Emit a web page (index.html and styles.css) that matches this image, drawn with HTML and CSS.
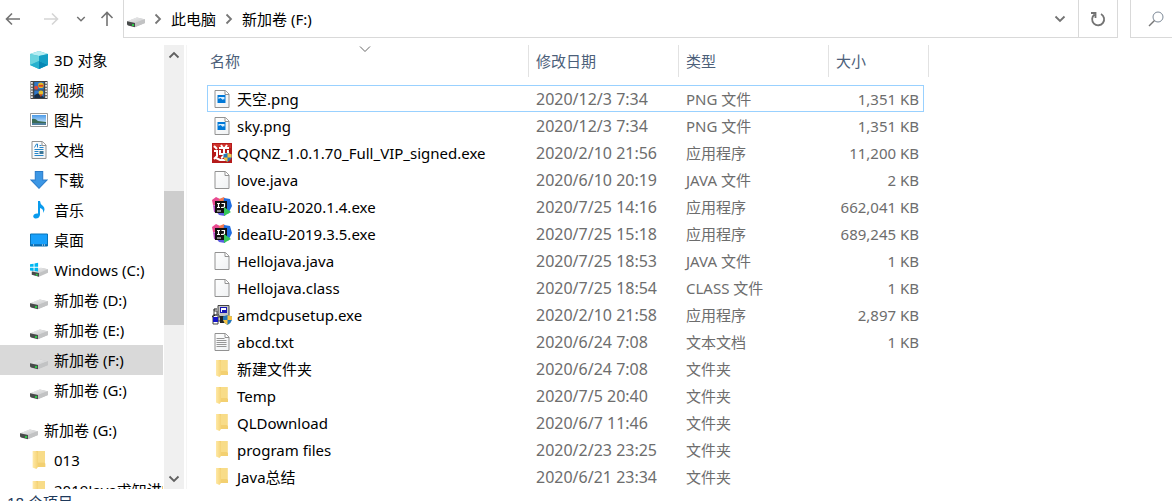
FILE: index.html
```
<!DOCTYPE html>
<html lang="zh-CN">
<head>
    <meta charset="UTF-8">
    <meta name="viewport" content="width=device-width, initial-scale=1.0">
    <title>新加卷 (F:)</title>
    <link rel="stylesheet" href="styles.css">
</head>
<body>
    <!-- shared icons -->
    <svg class="sprite" aria-hidden="true">
        <defs>
            <linearGradient id="paper" x2="1" y2="1"><stop offset="0" stop-color="#fff"/><stop offset="1" stop-color="#eff1f3"/></linearGradient>
            <linearGradient id="gold" x2="1"><stop offset="0" stop-color="#ffe9a6"/><stop offset="1" stop-color="#f5d376"/></linearGradient>
            <linearGradient id="sky" x2="0" y2="1"><stop offset="0" stop-color="#4c9be8"/><stop offset="1" stop-color="#e4f5ff"/></linearGradient>
            <linearGradient id="disk" x2="1" y2="1"><stop offset="0" stop-color="#eeeeef"/><stop offset="1" stop-color="#c8c9ca"/></linearGradient>
        </defs>
        <symbol id="drive" viewBox="0 0 18 18">
            <path d="M0 10.5 10 6.5 18 8.5 18 12 8 16 0 13z" fill="#bfc0c1"/>
            <path d="M0 10.2 9.5 6.5 18 8.2 8 12z" fill="url(#disk)"/>
            <path d="M0 10.2 8 12V16.2L1 14.4Q0 14 0 13z" fill="#484b4b"/>
            <path d="M8 12 18 8.2V12L8 16.2z" fill="#c2c3c4"/>
            <path d="M5 13h2v2H5z" fill="#28c943"/>
        </symbol>
        <symbol id="windrive" viewBox="0 0 20 18">
            <path d="M2 11 12 6.5 20 8.2V12L10 16.5 2 14z" fill="#c2c3c4"/>
            <path d="M2 10.7 12 6.5 20 8.2 10 12.2z" fill="url(#disk)"/>
            <path d="M2 10.7 10 12.2V16.5L2 14.3z" fill="#484b4b"/>
            <path d="M6.500 13.300h2v2h-2z" fill="#28c943"/>
            <path d="M0 2.500 4 2V5.500H0zM5 1.900 9 1V5.500H5zM0 6.500H4V10L0 9.500zM5 6.500H9V10.800L5 10.200z" fill="#00b7f1"/>
        </symbol>
        <symbol id="folder" viewBox="0 0 12 17">
            <path d="M3 0H11.500V11L12 12V15H3z" fill="#f3d071"/>
            <path d="M5 0H11.500V11H5z" fill="#f8dc88"/>
            <path d="M0 0H3L5 2V15L3.500 17 0 15.500z" fill="url(#gold)"/>
        </symbol>
        <symbol id="file" viewBox="0 0 15 18">
            <path d="M.5.5H11L14.500 4V17.500H.5z" fill="url(#paper)" stroke="#929292"/>
            <path d="M10.500.5V4.500H14.500" fill="#fff" stroke="#929292"/>
        </symbol>
        <symbol id="image" viewBox="0 0 15 18">
            <path d="M.5.5H11L14.500 4V17.500H.5z" fill="url(#paper)" stroke="#929292"/>
            <path d="M10.500.5V4.500H14.500" fill="#fff" stroke="#929292"/>
            <path d="M3 5H11V13H3z" fill="#0078d7"/>
            <path d="M4 7H10V9.500L9 9 8.500 10 6 8 4 9z" fill="#d9efff"/>
        </symbol>
        <symbol id="text" viewBox="0 0 15 18">
            <path d="M.5.5H11L14.500 4V17.500H.5z" fill="url(#paper)" stroke="#929292"/>
            <path d="M10.500.5V4.500H14.500" fill="#fff" stroke="#929292"/>
            <path d="M2 5.500H10M2 7.500H12M2 9.500H12M2 11.500H12M2 13.500H12" stroke="#969696"/>
        </symbol>
        <symbol id="shield" viewBox="0 0 9 10">
            <path d="M4.500 0 9 1.500V5Q8 8.500 4.500 10 1 8.500 0 5V1.500z" fill="#2677b8"/>
            <path d="M4.500 0 9 1.500V5H4.500zM0 5H4.500V10Q1 8.500 0 5z" fill="#f6c344"/>
        </symbol>
        <symbol id="qqnz" viewBox="0 0 20 20">
            <path d="M0 0H20V20H0z" fill="#b51b1b"/>
            <path d="M1 1H19V5H1z" fill="#cf332c"/>
            <path d="M2 3 5 6M2 8H5V13L2 16M4 15 8 17H14M7 5H17M9 2 11 5M15 2 13 5M8 7V11H16V7M12 5V11Q12 14 9 15" fill="none" stroke="#fff" stroke-width="2"/>
            <use href="#shield" x="11" y="10" width="9" height="9"/>
        </symbol>
        <symbol id="idea" viewBox="0 0 20 20">
            <path d="M0 3 4 0 10 3 8 9 1 8z" fill="#e84a91"/>
            <path d="M7 2 12 0 14 4 9 8z" fill="#f47950"/>
            <path d="M12 1 18 2 20 9 16 17 11 10z" fill="#1f6de0"/>
            <path d="M1 8 7 10 8 17 2 15z" fill="#b64ac5"/>
            <path d="M5 15 15 13 13 19 7 18z" fill="#5b5be0"/>
            <path d="M3 4H15V16H3z" fill="#111"/>
            <path d="M5 6.500H8M6.500 6V10.500M5 10.500H8M9.500 6.500H12.500V9.500Q12.500 10.500 9 10.500M5 14H9" fill="none" stroke="#fff" stroke-width="1.200"/>
            <path d="M12 10 19 15 12 19z" fill="#35c759"/>
        </symbol>
        <symbol id="setup" viewBox="0 0 20 20">
            <path d="M6 .5H17V10.500H15L18 13V16H5V12H8L6 9z" fill="#c5c5c5" stroke="#444"/>
            <path d="M8 2H15V8H8z" fill="#1717b5"/>
            <path d="M9 3H14V5H10V7H9z" fill="#fff"/>
            <path d="M2 6H5V10H2zM1 10H6V19H1z" fill="#fff" stroke="#444"/>
            <path d="M1 12H6V17H1z" fill="#1616c8"/>
            <path d="M0 12 3 10M2 6V4H5" stroke="#111" fill="none"/>
            <path d="M8 11H13V18H8z" fill="#222"/>
            <use href="#shield" x="11" y="10" width="9" height="10"/>
        </symbol>
        <symbol id="cube" viewBox="0 0 18 18">
            <path d="M0 3 9 0 18 3V14L9 18 0 14z" fill="#3bbdd0"/>
            <path d="M0 3 9 0 18 3 9 5z" fill="#b6edf2"/>
            <path d="M0 3 9 5V10L0 14z" fill="#6bd4df"/>
            <path d="M9 5 18 3V14L9 10z" fill="#149fc5"/>
            <path d="M0 14 9 10 18 14 9 18z" fill="#27b1ce"/>
            <path d="M9 10 18 14 9 18z" fill="#0787b5"/>
        </symbol>
        <symbol id="video" viewBox="0 0 18 19">
            <path d="M0 0H18V19H0z" fill="#444"/>
            <path d="M4 1H14V9H4zM4 10H14V18H4z" fill="#2e77c8"/>
            <path d="M1.500 1V18M16.500 1V18" stroke="#e8e8e8" stroke-width="2" stroke-dasharray="2 1"/>
            <circle cx="11" cy="4.500" r="3" fill="#e8bd24"/><path d="M8.500 4H13.500V6H8.500z" fill="#d64225"/>
            <circle cx="6" cy="7" r="2" fill="#e44831"/><path d="M4 15 8 13 14 17V18H4z" fill="#162e47"/>
            <circle cx="11" cy="12.500" r="2.500" fill="#e9c12b"/><path d="M9 14H13L11 17z" fill="#c34825"/>
        </symbol>
        <symbol id="picture" viewBox="0 0 18 14">
            <path d="M.5.5H17.500V13.500H.5z" fill="#fff" stroke="#999"/>
            <path d="M2 2H16V12H2z" fill="url(#sky)"/>
            <path d="M2 6Q5 5 8 8L16 9V10H2z" fill="#3b6b55"/><path d="M2 10H16V12H2z" fill="#507f9d"/>
        </symbol>
        <symbol id="document" viewBox="0 0 15 18">
            <path d="M.5.5H11L14.500 4V17.500H.5z" fill="url(#paper)" stroke="#929292"/>
            <path d="M10.500.5V4.500H14.500" fill="#fff" stroke="#929292"/>
            <path d="M3 6.500 5 3H6V6.500M8 4.500H10M8 6.500H12M3 8.500H12M3 10.500H7M3 12.500H7M3 14.500H12" fill="none" stroke="#2685c8"/>
            <path d="M8 10H12V13H8z" fill="#3c7798"/>
        </symbol>
        <symbol id="download" viewBox="0 0 16 17">
            <path d="M4.500.5H11.500V8.500H15.500L8 16.300.5 8.500H4.500z" fill="#3c97e5" stroke="#2a7ccb"/>
        </symbol>
        <symbol id="music" viewBox="0 0 12 18">
            <path d="M5 0H7Q7 3 10 5 13 8 10 12 11 8 7 7V14Q6 18 2 17.500-1 16 1 13.500 3 12 5 12.500z" fill="#0a9bed"/>
        </symbol>
        <symbol id="desktop" viewBox="0 0 18 13">
            <path d="M.5.5H17.500V12.500H.5z" fill="#18a0fb" stroke="#0874b9"/>
            <path d="M1 11H17V12H1z" fill="#064c80"/><path d="M3 11.500H5M12 11.500H16" stroke="#fff" stroke-dasharray="1 1"/>
        </symbol>
        <symbol id="chevron" viewBox="0 0 12 12"><path d="M1.500 3.500 6 8 10.500 3.500" fill="none" stroke="currentColor" stroke-width="1.800"/></symbol>
        <symbol id="arrow" viewBox="0 0 16 16"><path d="M15 8H1.500M7 2.500 1.500 8 7 13.500" fill="none" stroke="currentColor" stroke-width="1.600"/></symbol>
    </svg>

    <header class="toolbar">
        <div class="nav-buttons">
            <button class="nav-btn" aria-label="后退"><svg><use href="#arrow"/></svg></button>
            <button class="nav-btn forward" aria-label="前进" disabled><svg><use href="#arrow"/></svg></button>
            <button class="nav-btn recent" aria-label="最近浏览的位置"><svg><use href="#chevron"/></svg></button>
            <button class="nav-btn up" aria-label="向上"><svg><use href="#arrow"/></svg></button>
        </div>
        <div class="address">
            <svg class="address-icon"><use href="#drive"/></svg>
            <svg class="crumb-arrow"><use href="#chevron"/></svg>
            <a href="#">此电脑</a>
            <svg class="crumb-arrow"><use href="#chevron"/></svg>
            <a href="#">新加卷 (F:)</a>
            <button class="history-btn" aria-label="以前的位置"><svg><use href="#chevron"/></svg></button>
            <button class="refresh-btn" aria-label="刷新">
                <svg viewBox="0 0 16 16"><path d="M11 3A6 6 0 1 1 4.500 3.500M1 2H5.500V7" fill="none" stroke="currentColor" stroke-width="1.800"/></svg>
            </button>
        </div>
        <div class="search">
            <label for="search" aria-label="搜索"><svg viewBox="0 0 16 16"><circle cx="10" cy="6" r="5" fill="none" stroke="#7d8997"/><path d="M6.500 9.500 1 15" stroke="#777" stroke-width="1.500"/></svg></label>
            <input type="text" id="search">
        </div>
    </header>

    <main class="explorer">
        <nav class="sidebar">
            <a href="#" class="place"><svg class="i18"><use href="#cube"/></svg>3D 对象</a>
            <a href="#" class="place"><svg class="i18"><use href="#video"/></svg>视频</a>
            <a href="#" class="place"><svg class="i18"><use href="#picture"/></svg>图片</a>
            <a href="#" class="place"><svg class="i18"><use href="#document"/></svg>文档</a>
            <a href="#" class="place"><svg class="i18"><use href="#download"/></svg>下载</a>
            <a href="#" class="place"><svg class="i18"><use href="#music"/></svg>音乐</a>
            <a href="#" class="place"><svg class="i18"><use href="#desktop"/></svg>桌面</a>
            <a href="#" class="place"><svg class="i18"><use href="#windrive"/></svg>Windows (C:)</a>
            <a href="#" class="place"><svg class="i18 disk"><use href="#drive"/></svg>新加卷 (D:)</a>
            <a href="#" class="place"><svg class="i18 disk"><use href="#drive"/></svg>新加卷 (E:)</a>
            <a href="#" class="place selected"><svg class="i18 disk"><use href="#drive"/></svg>新加卷 (F:)</a>
            <a href="#" class="place"><svg class="i18 disk"><use href="#drive"/></svg>新加卷 (G:)</a>
            <a href="#" class="place root"><svg class="i18 disk"><use href="#drive"/></svg>新加卷 (G:)</a>
            <a href="#" class="place"><svg class="i18"><use href="#folder"/></svg>013</a>
            <a href="#" class="place"><svg class="i18"><use href="#folder"/></svg>2019Java求知讲堂</a>
        </nav>
        <div class="scrollbar">
            <button class="scroll-up" aria-label="向上滚动"><svg><use href="#chevron"/></svg></button>
            <div class="track"><div class="thumb"></div></div>
            <button class="scroll-down" aria-label="向下滚动"><svg><use href="#chevron"/></svg></button>
        </div>
        <section class="content">
            <table class="files">
                <thead>
                    <tr>
                        <th class="name">名称<svg class="sort" viewBox="0 0 12 6"><path d="M1 .5 6 5.500 11 .5" fill="none" stroke="#666"/></svg></th>
                        <th class="date">修改日期</th>
                        <th class="type">类型</th>
                        <th class="size">大小</th>
                    </tr>
                </thead>
                <tbody>
                    <tr class="focused"><td><div class="file"><svg><use href="#image"/></svg>天空.png</div></td><td>2020/12/3 7:34</td><td>PNG 文件</td><td>1,351 KB</td></tr>
                    <tr><td><div class="file"><svg><use href="#image"/></svg>sky.png</div></td><td>2020/12/3 7:34</td><td>PNG 文件</td><td>1,351 KB</td></tr>
                    <tr><td><div class="file app"><svg><use href="#qqnz"/></svg>QQNZ_1.0.1.70_Full_VIP_signed.exe</div></td><td>2020/2/10 21:56</td><td>应用程序</td><td>11,200 KB</td></tr>
                    <tr><td><div class="file"><svg><use href="#file"/></svg>love.java</div></td><td>2020/6/10 20:19</td><td>JAVA 文件</td><td>2 KB</td></tr>
                    <tr><td><div class="file app"><svg><use href="#idea"/></svg>ideaIU-2020.1.4.exe</div></td><td>2020/7/25 14:16</td><td>应用程序</td><td>662,041 KB</td></tr>
                    <tr><td><div class="file app"><svg><use href="#idea"/></svg>ideaIU-2019.3.5.exe</div></td><td>2020/7/25 15:18</td><td>应用程序</td><td>689,245 KB</td></tr>
                    <tr><td><div class="file"><svg><use href="#file"/></svg>Hellojava.java</div></td><td>2020/7/25 18:53</td><td>JAVA 文件</td><td>1 KB</td></tr>
                    <tr><td><div class="file"><svg><use href="#file"/></svg>Hellojava.class</div></td><td>2020/7/25 18:54</td><td>CLASS 文件</td><td>1 KB</td></tr>
                    <tr><td><div class="file app"><svg><use href="#setup"/></svg>amdcpusetup.exe</div></td><td>2020/2/10 21:58</td><td>应用程序</td><td>2,897 KB</td></tr>
                    <tr><td><div class="file"><svg><use href="#text"/></svg>abcd.txt</div></td><td>2020/6/24 7:08</td><td>文本文档</td><td>1 KB</td></tr>
                    <tr><td><div class="file folder"><svg><use href="#folder"/></svg>新建文件夹</div></td><td>2020/6/24 7:08</td><td>文件夹</td><td></td></tr>
                    <tr><td><div class="file folder"><svg><use href="#folder"/></svg>Temp</div></td><td>2020/7/5 20:40</td><td>文件夹</td><td></td></tr>
                    <tr><td><div class="file folder"><svg><use href="#folder"/></svg>QLDownload</div></td><td>2020/6/7 11:46</td><td>文件夹</td><td></td></tr>
                    <tr><td><div class="file folder"><svg><use href="#folder"/></svg>program files</div></td><td>2020/2/23 23:25</td><td>文件夹</td><td></td></tr>
                    <tr><td><div class="file folder"><svg><use href="#folder"/></svg>Java总结</div></td><td>2020/6/21 23:34</td><td>文件夹</td><td></td></tr>
                </tbody>
            </table>
        </section>
    </main>

    <footer class="status">18 个项目</footer>
</body>
</html>
```
FILE: styles.css
```
* {
    box-sizing: border-box;
}

body {
    margin: 0;
    height: 100vh;
    display: flex;
    flex-direction: column;
    overflow: hidden;
    background-color: #fff;
    color: #000;
    font-family: "Noto Sans", "Noto Sans CJK SC", sans-serif;
    font-size: 15px;
    line-height: 20px;
}

button {
    border: none;
    padding: 0;
    background: none;
    color: #737373;
    display: flex;
    align-items: center;
    justify-content: center;
}

a {
    color: inherit;
    text-decoration: none;
    white-space: nowrap;
}

svg {
    flex-shrink: 0;
}

.sprite {
    position: absolute;
    width: 0;
    height: 0;
}

/* toolbar */
.toolbar {
    display: flex;
    height: 38px;
    flex-shrink: 0;
    margin-bottom: 7px;
}

.nav-buttons {
    display: flex;
    align-items: center;
    width: 123px;
    padding-left: 5px;
}

.nav-btn {
    width: 16px;
    height: 36px;
}

.nav-btn svg {
    width: 16px;
    height: 16px;
}

.nav-btn.forward {
    margin-left: 22px;
    color: #d5d5d5;
}

.forward svg {
    transform: scaleX(-1);
}

.recent {
    margin-left: 14px;
}

.nav-btn.recent svg {
    width: 10px;
    height: 10px;
}

.history-btn svg,
.crumb-arrow {
    width: 12px;
    height: 12px;
}

.up {
    margin-left: 10px;
}

.up svg {
    transform: rotate(90deg);
}

.address {
    flex: 1;
    display: flex;
    align-items: center;
    border: 1px solid #d9d9d9;
    border-top: none;
    padding-left: 3px;
}

.address-icon {
    width: 18px;
    height: 18px;
    margin-top: 3px;
}

.crumb-arrow {
    margin: 0 7px;
    color: #777;
    transform: rotate(-90deg);
}

.history-btn {
    width: 37px;
    height: 37px;
    margin-left: auto;
}

.refresh-btn {
    width: 39px;
    height: 37px;
    border-left: 1px solid #d9d9d9;
}

.refresh-btn svg {
    width: 16px;
    height: 16px;
}

.search {
    display: flex;
    align-items: center;
    width: 42px;
    margin-left: 12px;
    padding-left: 17px;
    border-left: 1px solid #d9d9d9;
    border-bottom: 1px solid #d9d9d9;
}

.search svg {
    display: block;
    width: 16px;
    height: 16px;
}

.search input {
    min-width: 0;
    width: 8px;
    padding: 0;
    border: none;
    outline: none;
    font: inherit;
}

/* folder tree */
.explorer {
    flex: 1;
    display: flex;
    min-height: 0;
}

.sidebar {
    width: 163px;
    flex-shrink: 0;
    overflow: hidden;
}

.place {
    display: flex;
    align-items: center;
    gap: 6px;
    height: 30px;
    padding-left: 30px;
}

.place.selected {
    background-color: #d9d9d9;
}

.place.root {
    margin-top: 10px;
    padding-left: 20px;
}

.i18 {
    width: 18px;
    height: 18px;
}

.disk {
    margin-top: 3px;
}

.scrollbar {
    display: flex;
    flex-direction: column;
    width: 20px;
    margin-left: 1px;
    background-color: #f0f0f0;
    flex-shrink: 0;
}

.scrollbar button {
    height: 20px;
    color: #606060;
}

.scrollbar svg {
    width: 12px;
    height: 12px;
}

.scroll-up svg {
    transform: rotate(180deg);
}

.track {
    flex: 1;
    padding-top: 126px;
}

.thumb {
    height: 134px;
    background-color: #cdcdcd;
}

/* file list */
.content {
    flex: 1;
    min-width: 0;
    margin-left: 2px;
    padding-left: 20px;
    border-left: 1px solid #f5f5f5;
    overflow: hidden;
}

.files {
    width: 722px;
    table-layout: fixed;
    border-collapse: separate;
    border-spacing: 0;
    color: #6d6d6d;
}

.files th {
    height: 32px;
    padding: 0 0 0 7px;
    border-right: 1px solid #e2e2e2;
    color: #4c607a;
    font-weight: normal;
    text-align: left;
}

.files .name {
    position: relative;
    width: 322px;
    padding-left: 3px;
}

.files .date,
.files .type {
    width: 150px;
}

.sort {
    position: absolute;
    top: 1px;
    left: 152px;
    width: 12px;
    height: 6px;
}

/* gap between the header and the first row */
.files thead::after {
    content: "";
    display: table-row;
    height: 8px;
}

.files tbody tr {
    position: relative;
}

.files td {
    height: 27px;
    padding: 0 0 0 7px;
    white-space: nowrap;
}

.files td:first-child {
    padding-left: 5px;
}

.files td:nth-child(2) {
    font-size: 16px;
}

.files td:last-child {
    padding-right: 10px;
    text-align: right;
}

.focused td:last-child::after {
    content: "";
    position: absolute;
    inset: 0 5px 0 0;
    border: 1px solid #99d1ff;
}

.file {
    display: flex;
    align-items: center;
    gap: 5px;
    color: #000;
}

.file svg {
    width: 20px;
    height: 18px;
}

.app svg {
    height: 20px;
}

.folder svg {
    height: 17px;
}

.status {
    height: 12px;
    flex-shrink: 0;
    overflow: hidden;
    padding: 3px 7px;
    color: #1e395b;
}
```
